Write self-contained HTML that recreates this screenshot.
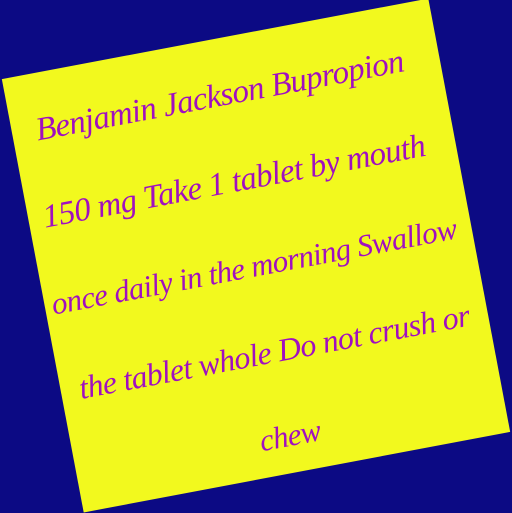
<!DOCTYPE html>
<html><head><style>
html,body{margin:0;padding:0;width:512px;height:512px;overflow:hidden;background:#0c0a84;}
.card{position:absolute;left:39px;top:34.5px;width:434px;height:441px;background:#f2f91e;transform:rotate(-10.7deg);transform-origin:center;}
.l{position:absolute;left:0;width:434px;text-align:center;font-family:"Liberation Serif",serif;font-style:italic;font-size:31px;color:#a010c0;line-height:40px;white-space:nowrap;letter-spacing:-0.6px;}
</style></head><body>
<div class="card">
<div class="l" style="top:37px;font-size:33px;left:-6px">Benjamin Jackson Bupropion</div>
<div class="l" style="top:124px;font-size:33px;left:-8px">150 mg Take 1 tablet by mouth</div>
<div class="l" style="top:211px;left:-4px">once daily in the morning Swallow</div>
<div class="l" style="top:298px;font-size:32px">the tablet whole Do not crush or</div>
<div class="l" style="top:384px">chew</div>
</div>
</body></html>
